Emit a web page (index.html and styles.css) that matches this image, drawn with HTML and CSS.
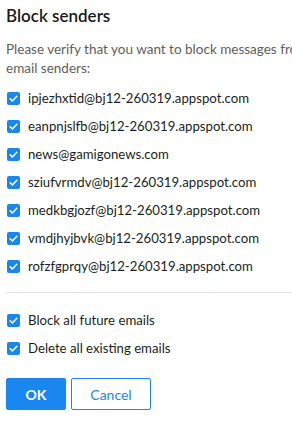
FILE: index.html
```html
<!DOCTYPE html>
<html>
<head>
<meta charset="utf-8">
<link rel="stylesheet" href="styles.css">
</head>
<body>
<div class="dialog">
  <h1 class="title">Block senders</h1>
  <p class="desc">Please verify that you want to block messages from email senders:</p>
  <ul class="list">
    <li class="row"><span class="cb"></span><span>ipjezhxtid@bj12-260319.appspot.com</span></li>
    <li class="row"><span class="cb"></span><span>eanpnjslfb@bj12-260319.appspot.com</span></li>
    <li class="row"><span class="cb"></span><span>news@gamigonews.com</span></li>
    <li class="row"><span class="cb"></span><span>sziufvrmdv@bj12-260319.appspot.com</span></li>
    <li class="row"><span class="cb"></span><span>medkbgjozf@bj12-260319.appspot.com</span></li>
    <li class="row"><span class="cb"></span><span>vmdjhyjbvk@bj12-260319.appspot.com</span></li>
    <li class="row"><span class="cb"></span><span>rofzfgprqy@bj12-260319.appspot.com</span></li>
  </ul>
  <hr class="divider">
  <ul class="list options">
    <li class="row"><span class="cb"></span><span>Block all future emails</span></li>
    <li class="row"><span class="cb"></span><span>Delete all existing emails</span></li>
  </ul>
  <div class="buttons">
    <button class="btn primary">OK</button>
    <button class="btn secondary">Cancel</button>
  </div>
</div>
</body>
</html>
```
FILE: styles.css
```css
html, body {
  margin: 0;
  padding: 0;
  background: #fff;
  overflow: hidden;
}
body {
  font-family: Lato, "Noto Sans", sans-serif;
  color: #201f1e;
}
.dialog {
  width: 330px;
  padding: 4px 0 0 6px;
  box-sizing: border-box;
}
.title {
  margin: 0;
  font-size: 17px;
  font-weight: 600;
  line-height: 24px;
  color: #1b1a19;
}
.desc {
  margin: 12px 0 0 0;
  font-size: 13.5px;
  line-height: 19px;
  color: #605e5c;
}
.list {
  list-style: none;
  margin: 6px 0 0 0;
  padding: 0;
}
.row {
  display: flex;
  align-items: center;
  gap: 8px;
  height: 28px;
  font-size: 13.2px;
  padding-left: 1px;
}
.cb {
  width: 13px;
  height: 13px;
  border-radius: 2px;
  background: #1a86f0 url("data:image/svg+xml;utf8,<svg xmlns='http://www.w3.org/2000/svg' viewBox='0 0 13 13'><path d='M3.2 6.8l2.2 2.1 4.4-4.6' fill='none' stroke='white' stroke-width='1.5' stroke-linecap='round' stroke-linejoin='round'/></svg>") center/13px 13px no-repeat;
  flex: none;
}
.divider {
  border: 0;
  border-top: 1px solid #e1e1e1;
  margin: 12px 0 13px 0;
}
.options {
  margin: 0;
}
.buttons {
  display: flex;
  gap: 5px;
  margin-top: 16px;
}
.btn {
  height: 32px;
  font-family: inherit;
  font-size: 14px;
  border-radius: 2px;
  padding: 0;
  box-sizing: border-box;
}
.primary {
  width: 60px;
  background: #1a86f0;
  border: 1px solid #1a86f0;
  color: #fff;
  font-weight: 700;
}
.secondary {
  width: 80px;
  background: #fff;
  border: 1px solid #1a86f0;
  color: #1a86f0;
}
```
